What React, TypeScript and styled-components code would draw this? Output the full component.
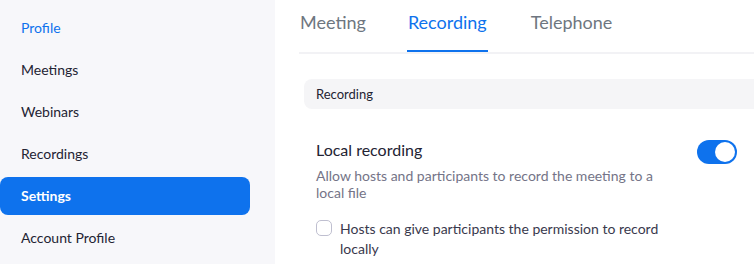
import styled, { createGlobalStyle } from 'styled-components';

const GlobalStyle = createGlobalStyle`
  body {
    margin: 0;
    font-family: Lato, 'Open Sans', sans-serif;
    background: #ffffff;
  }
`;

const Page = styled.div`
  display: flex;
  width: 754px;
  height: 264px;
  overflow: hidden;
`;

const Sidebar = styled.nav`
  width: 275px;
  flex-shrink: 0;
  background: #f7f7fa;
  padding-top: 9px;
  display: flex;
  flex-direction: column;
  gap: 4px;
  box-sizing: border-box;
`;

const NavItem = styled.a<{ $active?: boolean; $highlight?: boolean }>`
  display: flex;
  align-items: center;
  width: 250px;
  height: 38px;
  padding-left: 21px;
  padding-bottom: 1px;
  box-sizing: border-box;
  border-radius: 8px;
  font-size: 14px;
  font-weight: ${(p) => (p.$active ? 700 : 400)};
  color: ${(p) => (p.$active ? '#ffffff' : p.$highlight ? '#0e72ed' : '#232333')};
  background: ${(p) => (p.$active ? '#0e72ed' : 'transparent')};
  flex-shrink: 0;
`;

const Main = styled.main`
  flex: 1;
  min-width: 0;
  padding-left: 24px;
  overflow: hidden;
`;

const TabList = styled.div`
  display: flex;
  gap: 42px;
  border-bottom: 2px solid #f2f2f5;
  height: 52px;
`;

const Tab = styled.div<{ $active?: boolean }>`
  height: 52px;
  box-sizing: border-box;
  padding-top: 10px;
  font-size: 18px;
  line-height: 24px;
  color: ${(p) => (p.$active ? '#0e72ed' : '#6e7680')};
  border-bottom: 2px solid ${(p) => (p.$active ? '#0e72ed' : 'transparent')};
  margin-left: ${(p) => (p.$active ? '-1px' : '1px')};
  padding-left: ${(p) => (p.$active ? '1px' : '0')};
  padding-right: ${(p) => (p.$active ? '1px' : '0')};
`;

const SectionHeader = styled.div`
  margin: 25px -20px 0 5px;
  height: 30px;
  display: flex;
  align-items: center;
  padding-left: 12px;
  border-radius: 8px;
  background: #f5f5f7;
  font-size: 13px;
  color: #232333;
`;

const Setting = styled.section`
  padding: 30px 17px 0 17px;
  display: flex;
  justify-content: space-between;
  align-items: flex-start;
`;

const SettingText = styled.div`
  width: 360px;
`;

const SettingTitle = styled.div`
  font-size: 16px;
  line-height: 22px;
  color: #232333;
`;

const SettingDesc = styled.div`
  margin-top: 6px;
  font-size: 14px;
  line-height: 17px;
  color: #747487;
`;

const CheckRow = styled.label`
  display: flex;
  align-items: flex-start;
  gap: 8px;
  margin-top: 18px;
  font-size: 14px;
  line-height: 20px;
  color: #39394d;
`;

const CheckBox = styled.span`
  width: 16px;
  height: 16px;
  box-sizing: border-box;
  border: 1px solid #bfbfd0;
  border-radius: 5px;
  background: #ffffff;
  margin-top: 1px;
  flex-shrink: 0;
`;

const Toggle = styled.span<{ $on?: boolean }>`
  width: 40px;
  height: 24px;
  margin-top: 1px;
  border-radius: 12px;
  background: ${(p) => (p.$on ? '#0e72ed' : '#bfbfd0')};
  display: flex;
  align-items: center;
  justify-content: ${(p) => (p.$on ? 'flex-end' : 'flex-start')};
  padding: 0 2px;
  box-sizing: border-box;
  flex-shrink: 0;
`;

const Knob = styled.span`
  width: 20px;
  height: 20px;
  border-radius: 50%;
  background: #ffffff;
`;

const navItems = ['Profile', 'Meetings', 'Webinars', 'Recordings', 'Settings', 'Account Profile'];

export default function App() {
  return (
    <>
      <GlobalStyle />
      <Page>
        <Sidebar>
          {navItems.map((item) => (
            <NavItem key={item} $active={item === 'Settings'} $highlight={item === 'Profile'}>
              {item}
            </NavItem>
          ))}
        </Sidebar>
        <Main>
          <TabList>
            <Tab>Meeting</Tab>
            <Tab $active>Recording</Tab>
            <Tab>Telephone</Tab>
          </TabList>
          <SectionHeader>Recording</SectionHeader>
          <Setting>
            <SettingText>
              <SettingTitle>Local recording</SettingTitle>
              <SettingDesc>Allow hosts and participants to record the meeting to a local file</SettingDesc>
              <CheckRow>
                <CheckBox />
                <span>Hosts can give participants the permission to record locally</span>
              </CheckRow>
            </SettingText>
            <Toggle $on>
              <Knob />
            </Toggle>
          </Setting>
        </Main>
      </Page>
    </>
  );
}
